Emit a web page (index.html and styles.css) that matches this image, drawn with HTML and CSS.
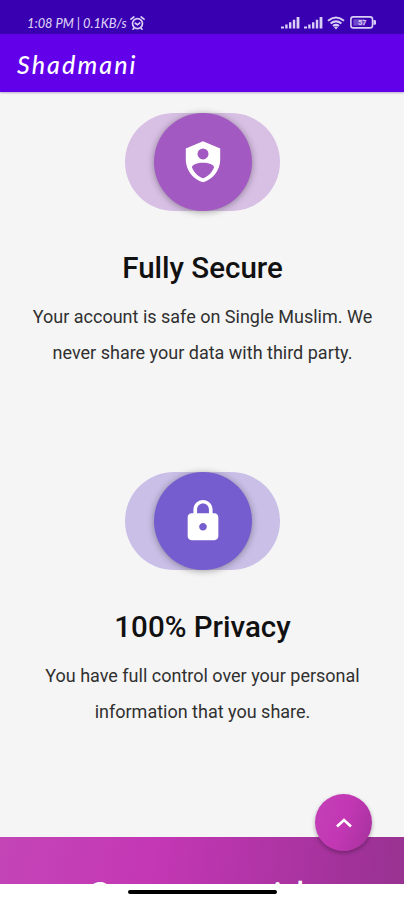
FILE: index.html
```html
<!DOCTYPE html>
<html lang="en">
<head>
<meta charset="utf-8">
<title>Shadmani</title>
<link rel="stylesheet" href="styles.css">
</head>
<body>
<div class="screen">
  <div class="status">
    <span class="status-text">1:08 PM | 0.1KB/s</span>
    <svg class="alarm" width="15" height="14" viewBox="0 0 15 14"><g fill="none" stroke="currentColor" stroke-width="1.7" stroke-linecap="round"><circle cx="7.5" cy="7.6" r="5"/><path d="M1 3.2 3.8 1M14 3.2 11.2 1M5.3 7.2 7.5 8.8 9.7 7M3.8 12.2 3 13.2M11.2 12.2 12 13.2"/></g></svg>
    <div class="status-icons">
      <svg width="19" height="13" viewBox="0 0 19 13" fill="currentColor"><path d="M0 10.5h3V12.5H0zM4.2 8.5h2.4v4H4.2zM8 6.2h2.4v6.3H8zM11.8 3.7h2.4v8.8h-2.4zM15.6 1h2.8v11.5h-2.8z"/></svg>
      <svg width="19" height="13" viewBox="0 0 19 13" fill="currentColor"><path d="M0 10.5h3V12.5H0zM4.2 8.5h2.4v4H4.2zM8 6.2h2.4v6.3H8zM11.8 3.7h2.4v8.8h-2.4zM15.6 1h2.8v11.5h-2.8z"/></svg>
      <svg class="wifi" width="18" height="14" viewBox="0 0 18 14"><g fill="none" stroke="currentColor" stroke-width="2.1"><path d="M1 4.8Q9-1.8 17 4.8M3.6 7.5Q9 3.1 14.4 7.5M6 10Q9 7.6 12 10"/></g><path d="M7 11.2Q9 9.8 11 11.2L9 13.4Z" fill="currentColor"/></svg>
      <svg class="battery" width="27" height="13" viewBox="0 0 27 13"><rect x=".9" y=".9" width="21.6" height="11" rx="2.4" fill="none" stroke="currentColor" stroke-width="1.6"/><path d="M23.4 4h1.4q1.2 0 1.2 1.2v2.4q0 1.2-1.2 1.2h-1.4z" fill="currentColor"/><path d="M3.4 3.2h11.4v6.4H3.4z" fill="currentColor" opacity=".35"/><text x="8" y="9.2" font-size="7.5" font-weight="700" fill="currentColor">57</text></svg>
    </div>
  </div>
  <header class="appbar"><h1>Shadmani</h1></header>
  <main>
    <section class="feature secure">
      <div class="emblem"><div class="disc"><svg width="48" height="48" viewBox="0 0 24 24" fill="#fff"><path fill-rule="evenodd" d="M12 1.6 3.4 5.3v5.6c0 5.1 3.7 10 8.6 11.2 4.9-1.2 8.6-6.1 8.6-11.2V5.3zM12 5.2a2.75 2.75 0 1 1 0 5.5 2.75 2.75 0 0 1 0-5.5zM12 12.4c2.8 0 5.5.9 5.5 2.3-1.1 2.6-3.4 4.8-5.5 5.4-2.1-.6-4.4-2.8-5.5-5.4 0-1.4 2.7-2.3 5.5-2.3z"/></svg></div></div>
      <h2>Fully Secure</h2>
      <p>Your account is safe on Single Muslim. We<br>never share your data with third party.</p>
    </section>
    <section class="feature privacy">
      <div class="emblem"><div class="disc"><svg width="46" height="46" viewBox="0 0 24 24" fill="#fff"><path d="M18 8h-1V6c0-2.76-2.24-5-5-5S7 3.24 7 6v2H6c-1.1 0-2 .9-2 2v10c0 1.1.9 2 2 2h12c1.1 0 2-.9 2-2V10c0-1.1-.9-2-2-2zm-6 9c-1.1 0-2-.9-2-2s.9-2 2-2 2 .9 2 2-.9 2-2 2zm3.1-9H8.9V6c0-1.71 1.39-3.1 3.1-3.1s3.1 1.39 3.1 3.1v2z"/></svg></div></div>
      <h2>100% Privacy</h2>
      <p>You have full control over your personal<br>information that you share.</p>
    </section>
  </main>
  <footer class="connect"><h2>Connect with</h2></footer>
  <div class="navbar"><div class="handle"></div></div>
  <div class="fab"><svg width="18" height="12" viewBox="0 0 18 12"><path d="M2 9.5 9 3l7 6.5" fill="none" stroke="#fff" stroke-width="2.6"/></svg></div>
</div>
</body>
</html>
```
FILE: styles.css
```css
* { box-sizing: border-box; }
body { margin: 0; font-family: Roboto, "Liberation Sans", sans-serif; }
h1, h2, p { margin: 0; }
svg { display: block; flex: none; }
.screen { position: relative; width: 404px; height: 900px; overflow: hidden; background: #f5f5f5; display: flex; flex-direction: column; }
.status { height: 34px; flex: none; background: #3900b2; color: #d9cef5; display: flex; align-items: center; padding: 11px 27px 0 27px; }
.status-text { font: italic 500 12.8px/16px Lato, sans-serif; white-space: nowrap; width: 103px; }
.status-icons { margin-left: auto; display: flex; align-items: center; gap: 4px; }
.battery { margin-left: 1px; }
.appbar { height: 58px; flex: none; background: #6200ea; display: flex; align-items: center; padding: 2px 0 0 17px; box-shadow: 0 1px 2px rgba(50, 0, 100, .3); z-index: 1; }
.appbar h1 { color: #fff; font: italic 500 25px/34px Lato, sans-serif; letter-spacing: 2.1px; }
main { height: 745px; flex: none; padding: 21px 0 0 1px; }
.feature { height: 358.5px; display: flex; flex-direction: column; align-items: center; text-align: center; }
.emblem { width: 155px; height: 98px; border-radius: 49px; display: flex; justify-content: center; flex: none; }
.disc { width: 98px; height: 98px; border-radius: 50%; display: flex; align-items: center; justify-content: center; box-shadow: 0 1px 7px rgba(0, 0, 0, .35); }
.secure .emblem { background: #d8bfe4; }
.secure .disc { background: #a259c1; }
.privacy .emblem { background: #c9bfe7; }
.privacy .disc { background: #755dcf; }
.feature h2 { margin-top: 37px; font-size: 29.5px; line-height: 40px; font-weight: 500; color: #111; white-space: nowrap; }
.feature p { margin-top: 11px; font-size: 18px; line-height: 36px; color: #303030; white-space: nowrap; }
.connect { height: 47px; flex: none; overflow: hidden; background: linear-gradient(100deg, #c345b6, #c437b5 38%, #a03299 88%, #983390); text-align: center; padding-top: 38px; }
.connect h2 { color: #fff; font-size: 39px; line-height: 44px; font-weight: 400; letter-spacing: .3px; white-space: nowrap; }
.navbar { flex: 1; background: #fff; display: flex; justify-content: center; padding-top: 6px; }
.handle { width: 149px; height: 4px; border-radius: 2px; background: #000; }
.fab { position: absolute; left: 315px; top: 794px; width: 57px; height: 57px; border-radius: 50%; background: linear-gradient(110deg, #c33db6 20%, #c237b4 50%, #a5329b); box-shadow: 0 2px 4px rgba(0, 0, 0, .3); display: flex; align-items: center; justify-content: center; }
```
